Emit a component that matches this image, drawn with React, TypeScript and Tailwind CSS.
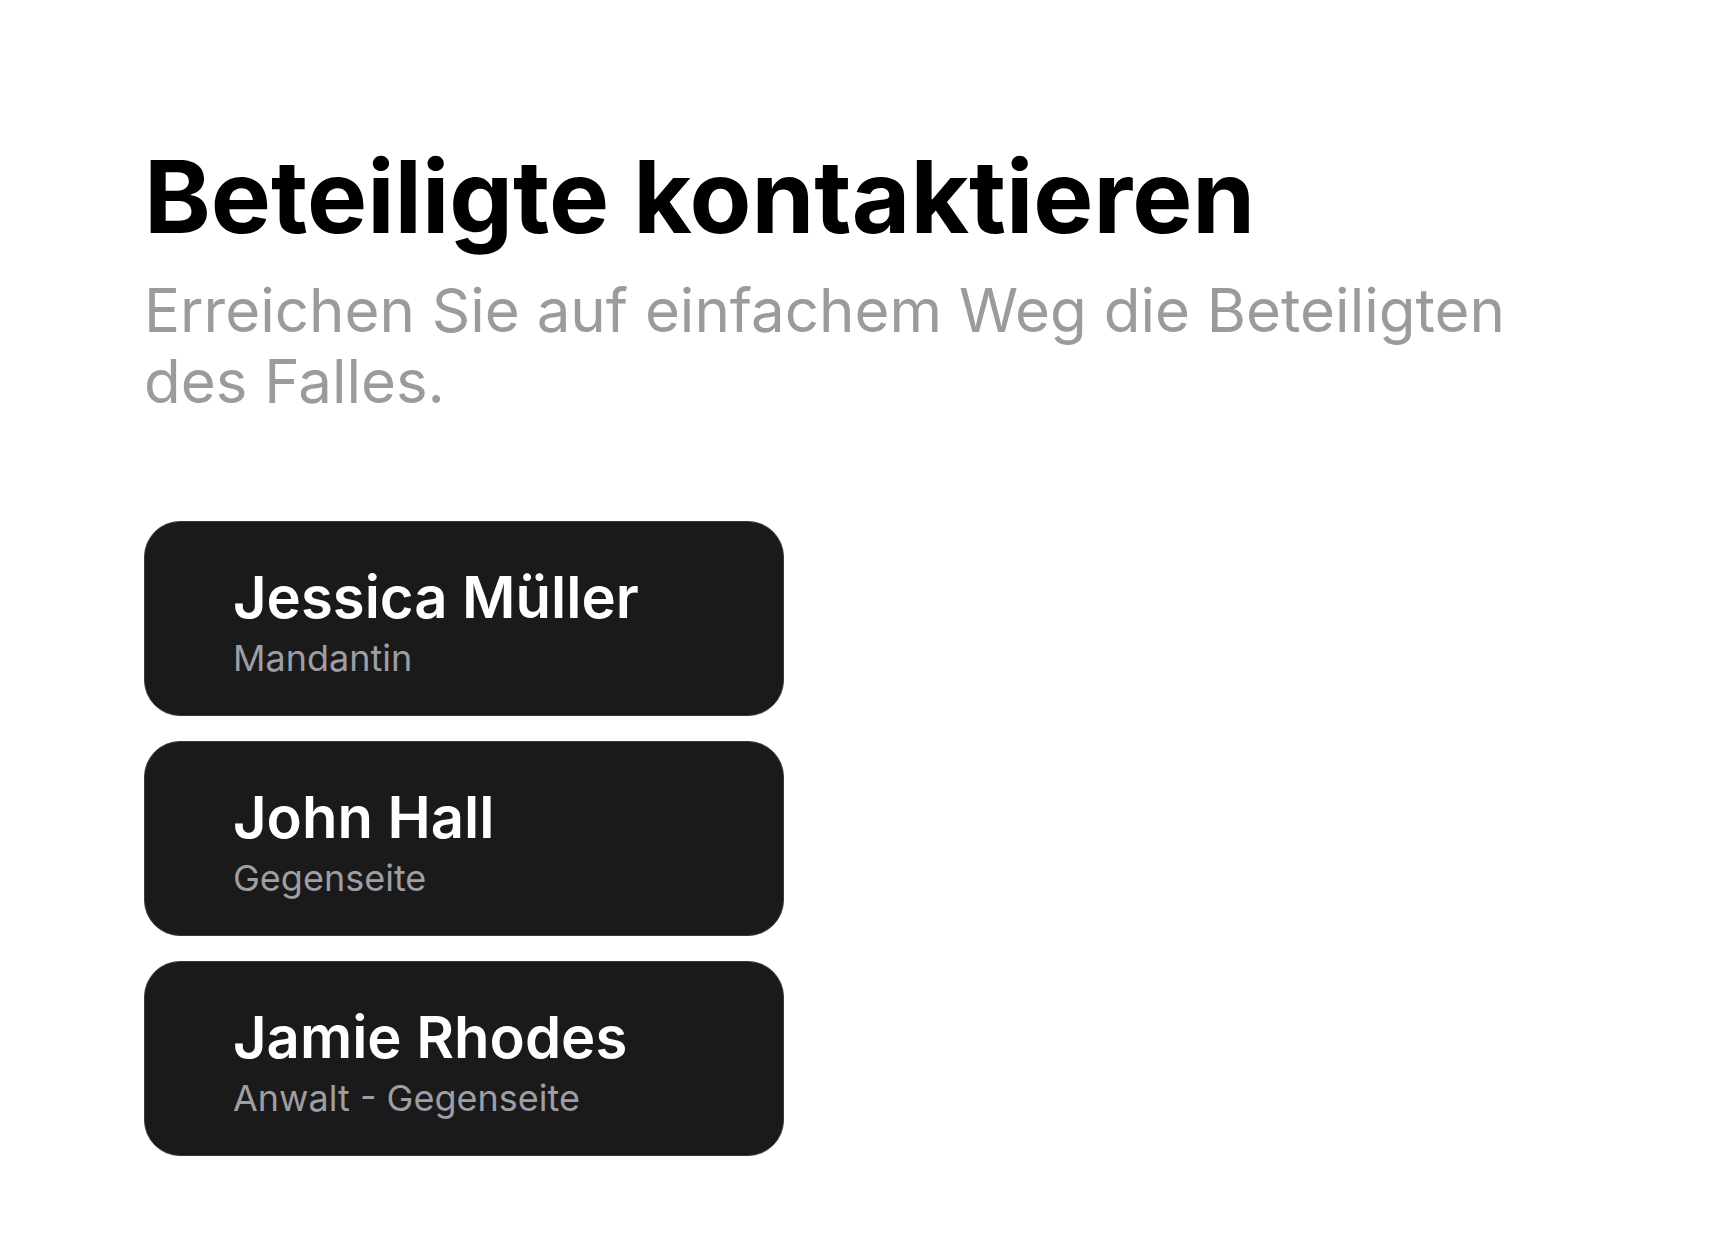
const contacts = [
  { name: "Jessica Müller", role: "Mandantin" },
  { name: "John Hall", role: "Gegenseite" },
  { name: "Jamie Rhodes", role: "Anwalt - Gegenseite" },
];

export default function App() {
  return (
    <div className="min-h-screen w-full bg-white font-['Inter',sans-serif] px-[144px] pt-[146px]">
      <h1 className="text-[101px] leading-none font-bold text-black">
        Beteiligte kontaktieren
      </h1>
      <p className="mt-[28px] max-w-[1420px] text-[60px] leading-[71px] text-[#9b9b9b]">
        Erreichen Sie auf einfachem Weg die Beteiligten des Falles.
      </p>

      <div className="mt-[104px] flex flex-col gap-[25px]">
        {contacts.map((c) => (
          <div
            key={c.name}
            className="w-[640px] h-[195px] rounded-[36px] bg-[#1a1a1a] border border-[#3a3a3a] flex flex-col justify-center pl-[88px] pt-[8px]"
          >
            <div className="text-[58px] leading-[64px] font-semibold text-white">
              {c.name}
            </div>
            <div className="mt-[6px] text-[36px] leading-[46px] text-[#9e9ea6]">
              {c.role}
            </div>
          </div>
        ))}
      </div>
    </div>
  );
}
